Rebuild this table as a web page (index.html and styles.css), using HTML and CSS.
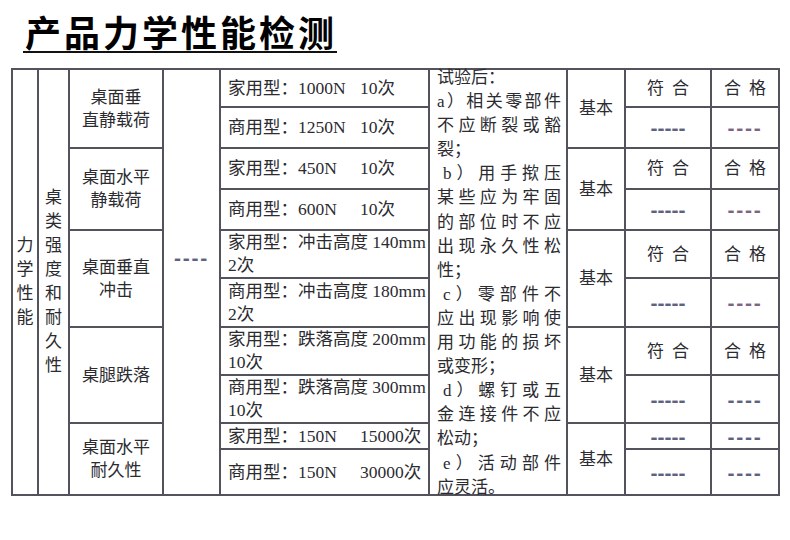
FILE: index.html
```html
<!DOCTYPE html>
<html lang="zh-CN">
<head>
<meta charset="utf-8">
<title>产品力学性能检测</title>
<link rel="stylesheet" href="styles.css">
</head>
<body>
<div class="page">
  <div class="title-wrap"><h1 class="title">产品力学性能检测</h1></div>
  <div class="sheet">
    <div class="cell c1 all"><div class="vert">力学性能</div></div>
    <div class="cell c2 all"><div class="vert">桌类强度和耐久性</div></div>

    <div class="cell c3 g1"><div class="two">桌面垂<br>直静载荷</div></div>
    <div class="cell c3 g2"><div class="two">桌面水平<br>静载荷</div></div>
    <div class="cell c3 g3"><div class="two">桌面垂直<br>冲击</div></div>
    <div class="cell c3 g4"><div class="two">桌腿跌落</div></div>
    <div class="cell c3 g5"><div class="two">桌面水平<br>耐久性</div></div>

    <div class="cell c4 all mid-dash"><span class="dash dash4">----</span></div>

    <div class="cell c5 r1 test"><span class="lbl">家用型：1000N</span><span class="cnt">10次</span></div>
    <div class="cell c5 r2 test"><span class="lbl">商用型：1250N</span><span class="cnt">10次</span></div>
    <div class="cell c5 r3 test"><span class="lbl">家用型：450N</span><span class="cnt">10次</span></div>
    <div class="cell c5 r4 test"><span class="lbl">商用型：600N</span><span class="cnt">10次</span></div>
    <div class="cell c5 r5 test"><div class="wrap">家用型：冲击高度 140mm<br>2次</div></div>
    <div class="cell c5 r6 test"><div class="wrap">商用型：冲击高度 180mm<br>2次</div></div>
    <div class="cell c5 r7 test"><div class="wrap">家用型：跌落高度 200mm<br>10次</div></div>
    <div class="cell c5 r8 test"><div class="wrap">商用型：跌落高度 300mm<br>10次</div></div>
    <div class="cell c5 r9 test"><span class="lbl">家用型：150N</span><span class="cnt">15000次</span></div>
    <div class="cell c5 r10 test"><span class="lbl">商用型：150N</span><span class="cnt">30000次</span></div>

    <div class="cell c6 all result">
      <div class="result-text">
        <div class="ln">试验后：</div>
        <div class="ln j">a）相关零部件</div>
        <div class="ln j">不应断裂或豁</div>
        <div class="ln">裂；</div>
        <div class="ln j ind">b）用手揿压</div>
        <div class="ln j">某些应为牢固</div>
        <div class="ln j">的部位时不应</div>
        <div class="ln j">出现永久性松</div>
        <div class="ln">性；</div>
        <div class="ln j ind">c）零部件不</div>
        <div class="ln j">应出现影响使</div>
        <div class="ln j">用功能的损坏</div>
        <div class="ln">或变形；</div>
        <div class="ln j ind">d）螺钉或五</div>
        <div class="ln j">金连接件不应</div>
        <div class="ln">松动；</div>
        <div class="ln j ind">e）活动部件</div>
        <div class="ln">应灵活。</div>
      </div>
    </div>

    <div class="cell c7 g1">基本</div>
    <div class="cell c7 g2">基本</div>
    <div class="cell c7 g3">基本</div>
    <div class="cell c7 g4">基本</div>
    <div class="cell c7 g5">基本</div>

    <div class="cell c8 r1 spaced">符 合</div>
    <div class="cell c9 r1 spaced">合 格</div>
    <div class="cell c8 r2"><span class="dash dash5">-----</span></div>
    <div class="cell c9 r2"><span class="dash dash4 pink">----</span></div>
    <div class="cell c8 r3 spaced">符 合</div>
    <div class="cell c9 r3 spaced">合 格</div>
    <div class="cell c8 r4"><span class="dash dash5">-----</span></div>
    <div class="cell c9 r4"><span class="dash dash4 pink">----</span></div>
    <div class="cell c8 r5 spaced">符 合</div>
    <div class="cell c9 r5 spaced">合 格</div>
    <div class="cell c8 r6"><span class="dash dash5">-----</span></div>
    <div class="cell c9 r6"><span class="dash dash4 pink">----</span></div>
    <div class="cell c8 r7 spaced">符 合</div>
    <div class="cell c9 r7 spaced">合 格</div>
    <div class="cell c8 r8"><span class="dash dash5">-----</span></div>
    <div class="cell c9 r8"><span class="dash dash4">----</span></div>
    <div class="cell c8 r9"><span class="dash dash5">-----</span></div>
    <div class="cell c9 r9"><span class="dash dash4">----</span></div>
    <div class="cell c8 r10"><span class="dash dash5">-----</span></div>
    <div class="cell c9 r10"><span class="dash dash4">----</span></div>
  </div>
</div>
</body>
</html>
```

FILE: styles.css
```css
html, body {
  margin: 0;
  padding: 0;
  background: #ffffff;
}

.page {
  width: 790px;
  height: 540px;
  overflow: hidden;
  font-family: "Liberation Serif", "Noto Sans CJK SC", serif;
  color: #2b2b30;
}

.title-wrap {
  display: flex;
  padding: 11px 0 0 23px;
}

.title {
  margin: 0;
  padding-left: 2px;
  font-family: "Noto Sans CJK SC", sans-serif;
  font-weight: 700;
  font-size: 36px;
  line-height: 40px;
  letter-spacing: 3px;
  color: #000;
  border-bottom: 2px solid #111;
}

.sheet {
  margin: 15px 0 0 11px;
  width: max-content;
  display: grid;
  grid-template-columns: 24px 29px 92px 55px 207px 136px 56px 84px 66px;
  grid-template-rows: 36px 39px 39px 39px 46px 47px 46px 46px 24px 44px;
  gap: 2px;
  padding: 2px;
  background: #52535c;
}

.cell {
  background: #fff;
  display: flex;
  align-items: center;
  justify-content: center;
  font-size: 17px;
  line-height: 23px;
  min-width: 0;
}

.c1 { grid-column: 1; }
.c2 { grid-column: 2; }
.c3 { grid-column: 3; }
.c4 { grid-column: 4; }
.c5 { grid-column: 5; }
.c6 { grid-column: 6; }
.c7 { grid-column: 7; }
.c8 { grid-column: 8; }
.c9 { grid-column: 9; }

.all { grid-row: 1 / 11; }
.g1 { grid-row: 1 / 3; }
.g2 { grid-row: 3 / 5; }
.g3 { grid-row: 5 / 7; }
.g4 { grid-row: 7 / 9; }
.g5 { grid-row: 9 / 11; }
.r1 { grid-row: 1; }
.r2 { grid-row: 2; }
.r3 { grid-row: 3; }
.r4 { grid-row: 4; }
.r5 { grid-row: 5; }
.r6 { grid-row: 6; }
.r7 { grid-row: 7; }
.r8 { grid-row: 8; }
.r9 { grid-row: 9; }
.r10 { grid-row: 10; }

.vert {
  width: 17px;
  line-height: 24px;
  text-align: center;
  word-break: break-all;
}

.two {
  text-align: center;
  line-height: 23px;
}

.mid-dash {
  padding-bottom: 50px;
}

.dash {
  font-family: "Liberation Sans", sans-serif;
  font-weight: 700;
  font-size: 21px;
  line-height: 1;
  color: #5e6280;
}
.dash4 { letter-spacing: 1.75px; }
.dash5 { letter-spacing: 0; }
.dash.pink { color: #7e6482; }

.test {
  justify-content: flex-start;
  padding-left: 7px;
  font-size: 17.5px;
}
.test .lbl {
  width: 132px;
  flex: none;
  white-space: nowrap;
}
.test .cnt {
  white-space: nowrap;
}
.test .wrap {
  white-space: nowrap;
  line-height: 23px;
}

.result {
  display: block;
  padding: 0 5px 0 7px;
  font-size: 17px;
}
.result-text {
  margin-top: -4px;
  line-height: 24.1px;
}
.ln {
  white-space: nowrap;
}
.ln.j {
  white-space: normal;
  text-align: justify;
  text-align-last: justify;
}
.ln.ind {
  padding-left: 6px;
}

.spaced {
  word-spacing: 4px;
}
```
